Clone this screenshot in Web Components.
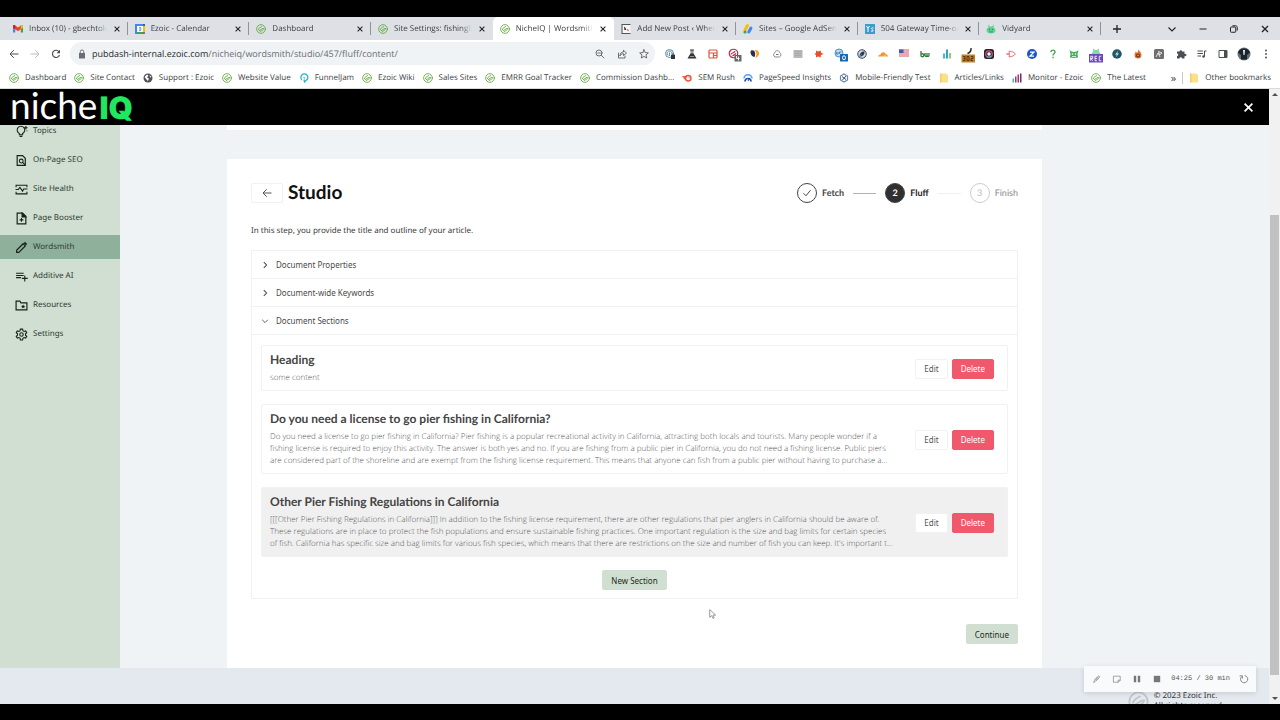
<!DOCTYPE html>
<html lang="en">
<head>
<meta charset="utf-8">
<meta name="viewport" content="width=device-width, initial-scale=1">
<title>NicheIQ | Wordsmith Studio</title>
<style>
    html, body
    {
        margin: 0;
        height: 100%;
    }

    body
    {
        background: #000;
        overflow: hidden;
        font-family: "Noto Sans", sans-serif;
        font-size: 8px;
        text-rendering: geometricPrecision;
        --ui-font: "Open Sans", "Noto Sans", sans-serif;
        --title-font: "Lato", "Open Sans", sans-serif;
        --sage: #d1dfd3;
        --line: #f0f2f2;
        --rail: 120px;
    }
</style>
</head>
<body>
<browser-window>
    <tab-strip slot="tabs">
        <browser-tab icon="gmail">Inbox (10) - gbechtold@ezoic</browser-tab>
        <browser-tab icon="calendar">Ezoic - Calendar</browser-tab>
        <browser-tab icon="ezoic">Dashboard</browser-tab>
        <browser-tab icon="ezoic" class="last">Site Settings: fishinglic.com</browser-tab>
        <browser-tab icon="ezoic" active>NicheIQ | Wordsmith Studio</browser-tab>
        <browser-tab icon="post">Add New Post ‹ Where to</browser-tab>
        <browser-tab icon="adsense">Sites – Google AdSense</browser-tab>
        <browser-tab icon="ys">504 Gateway Time-out</browser-tab>
        <browser-tab icon="vidyard">Vidyard</browser-tab>
    </tab-strip>
    <address-bar slot="address" host="pubdash-internal.ezoic.com" path="/nicheiq/wordsmith/studio/457/fluff/content/"></address-bar>
    <bookmark-bar slot="bookmarks">
        <book-mark icon="ezoic">Dashboard</book-mark>
        <book-mark icon="ezoic">Site Contact</book-mark>
        <book-mark icon="globe">Support : Ezoic</book-mark>
        <book-mark icon="ezoic">Website Value</book-mark>
        <book-mark icon="funnel">FunnelJam</book-mark>
        <book-mark icon="ezoic">Ezoic Wiki</book-mark>
        <book-mark icon="ezoic">Sales Sites</book-mark>
        <book-mark icon="ezoic">EMRR Goal Tracker</book-mark>
        <book-mark icon="ezoic">Commission Dashb...</book-mark>
        <book-mark icon="semrush">SEM Rush</book-mark>
        <book-mark icon="speed">PageSpeed Insights</book-mark>
        <book-mark icon="mobile">Mobile-Friendly Test</book-mark>
        <book-mark icon="folder">Articles/Links</book-mark>
        <book-mark icon="bars">Monitor - Ezoic</book-mark>
        <book-mark icon="ezoic">The Latest</book-mark>
        <book-mark slot="other" icon="folder">Other bookmarks</book-mark>
    </bookmark-bar>

    <niche-header></niche-header>
    <side-nav slot="side">
        <nav-item icon="bulb">Topics</nav-item>
        <nav-item icon="pagesearch">On-Page SEO</nav-item>
        <nav-item icon="health">Site Health</nav-item>
        <nav-item icon="booster">Page Booster</nav-item>
        <nav-item icon="pencil" active>Wordsmith</nav-item>
        <nav-item icon="listplus">Additive AI</nav-item>
        <nav-item icon="resources">Resources</nav-item>
        <nav-item icon="gear">Settings</nav-item>
    </side-nav>
    <studio-panel slot="main">
        <step-item slot="steps" state="done">Fetch</step-item>
        <step-item slot="steps" state="current" number="2">Fluff</step-item>
        <step-item slot="steps" state="wait" number="3">Finish</step-item>

        <collapse-row>Document Properties</collapse-row>
        <collapse-row>Document-wide Keywords</collapse-row>
        <collapse-row open>Document Sections</collapse-row>

        <section-card slot="sections">
            <span slot="title">Heading</span>
            some content
        </section-card>
        <section-card slot="sections">
            <span slot="title">Do you need a license to go pier fishing in California?</span>
            Do you need a license to go pier fishing in California? Pier fishing is a popular recreational activity in California, attracting both locals and tourists. Many people wonder if a<br>
            fishing license is required to enjoy this activity. The answer is both yes and no. If you are fishing from a public pier in California, you do not need a fishing license. Public piers<br>
            are considered part of the shoreline and are exempt from the fishing license requirement. This means that anyone can fish from a public pier without having to purchase a...
        </section-card>
        <section-card slot="sections" active>
            <span slot="title">Other Pier Fishing Regulations in California</span>
            [[[Other Pier Fishing Regulations in California]]] In addition to the fishing license requirement, there are other regulations that pier anglers in California should be aware of.<br>
            These regulations are in place to protect the fish populations and ensure sustainable fishing practices. One important regulation is the size and bag limits for certain species<br>
            of fish. California has specific size and bag limits for various fish species, which means that there are restrictions on the size and number of fish you can keep. It's important t...
        </section-card>
    </studio-panel>
    <niche-footer slot="footer"></niche-footer>
    <record-bar slot="overlay"></record-bar>
</browser-window>

<script>
// Each icon is [viewBox, markup]. Stroke icons take the current text colour.
const line = 'fill="none" stroke="currentColor" stroke-width="1.6" stroke-linecap="round" stroke-linejoin="round"';

const icons = {
    ezoic: ['0 0 20 20', '<g fill="none" stroke="#5fa53c" stroke-width="1.7" stroke-linecap="round"><circle cx="10" cy="10" r="8.7"/><path d="M4.8 11.4c.2-2.600 1.800-3.500 3.600-4.500l3-1.700M6.500 13.300l7-4.500M8.500 15l3.200-1.800c2-1.100 3.600-2.200 3.600-4.400"/></g>'],
    gmail: ['0 0 20 16', '<path d="M0 2v13h4.500V6z" fill="#4285f4"/><path d="M20 2v13h-4.500V6z" fill="#34a853"/><path d="M0 2.500C0 0 3-.5 4.500 1L10 5.200 15.500 1C17 -.5 20 0 20 2.500V5l-10 7.500L0 5z" fill="#ea4335"/><path d="M15.500 1C17-.5 20 0 20 2.500V5l-4.500 3.500z" fill="#fbbc04"/><path d="M0 2.500C0 0 3-.5 4.500 1v7.500L0 5z" fill="#c5221f"/>'],
    calendar: ['0 0 20 20', '<path d="M0 0h20v20H0z" fill="#4285f4"/><path d="M16 4h4v12h-4z" fill="#fbbc04"/><path d="M4 16h12v4H4z" fill="#34a853"/><path d="M16 16h4l-4 4z" fill="#ea4335"/><path d="M16 0h4v4h-4z" fill="#1967d2"/><path d="M4 4h12v12H4z" fill="#fff"/><path d="M8 7h3.500v6H8M8 10h3.500" fill="none" stroke="#4285f4" stroke-width="1.500"/>'],
    post: ['0 0 20 20', '<path d="M1 1h18v18H1z" fill="#f7f7f7"/><path d="M19 1H2v18h17" fill="none" stroke="#555" stroke-width="2.200"/><path d="M6 5l4 4v3H7z" fill="#222"/><path d="M11 11h4v4z" fill="#b33"/>'],
    adsense: ['0 0 20 20', '<path d="M9 3L4 12" stroke="#fbbc04" stroke-width="6" stroke-linecap="round"/><path d="M16 8l-4.500 8" stroke="#4285f4" stroke-width="6" stroke-linecap="round"/><circle cx="4" cy="16" r="3.200" fill="#34a853"/>'],
    ys: ['0 0 20 20', '<path d="M0 0h20v20H0z" fill="#3c9dcb"/><path d="M3 4l3 5 3-5M6 9v7M17 8c-4-2-5 2-2.500 3s2.500 5-2.500 3" fill="none" stroke="#fff" stroke-width="2"/>'],
    vidyard: ['0 0 20 20', '<path d="M5 7L4 1l4 4h4l4-4-1 6c3 1 4 4 4 6 0 4-4 6-9 6s-9-2-9-6c0-2 1-5 4-6z" fill="#5fd193"/><g fill="#2d8b63"><circle cx="7" cy="11" r="1.500"/><circle cx="13" cy="11" r="1.500"/><path d="M6 15h8v1.500H6z"/></g>'],
    globe: ['0 0 20 20', '<circle cx="10" cy="10" r="9" fill="#4d5156"/><path d="M3 8l5-5 3 2-3 4 4 2-2 5-3-3zM13 4l4 4-3 1z" fill="#fff"/>'],
    funnel: ['0 0 20 20', '<path d="M6 14a7 7 0 1 1 8 1l-3 3-1-5" fill="none" stroke="#2bb6c4" stroke-width="2.600"/><path d="M7 8h6l-2 4z" fill="#5fd3cf"/>'],
    semrush: ['0 0 20 20', '<path d="M0 6h10v3H5l4 4H5z" fill="#f0642f"/><circle cx="12.500" cy="10.500" r="5.500" fill="none" stroke="#ee5432" stroke-width="2.800"/><path d="M12.500 8a3 3 0 0 1 2.500 3" stroke="#ee5432" stroke-width="1.400" fill="none"/>'],
    speed: ['0 0 20 20', '<path d="M2 11a8 7.500 0 0 1 16 0" fill="none" stroke="#4ea0f0" stroke-width="3"/><path d="M4 17a6 6 0 0 1 12 0" fill="none" stroke="#1b4fa8" stroke-width="3.400"/><path d="M9 15l6-7-4 8z" fill="#14366f"/>'],
    mobile: ['0 0 20 20', '<path d="M10 2l7 4v8l-7 4-7-4V6z" fill="none" stroke="#6b86ae" stroke-width="2.400"/><path d="M6 7l8 6M14 6l-7 8" stroke="#374d77" stroke-width="2"/>'],
    folder: ['0 0 20 20', '<path d="M2 1h12l4 3v15H2z" fill="#fbe08a"/><path d="M2 1h3v18H2z" fill="#f3cf66"/>'],
    bars: ['0 0 20 20', '<path d="M1 11h3v8H1z" fill="#44b4a6"/><path d="M6 7h3v12H6z" fill="#7e3f98"/><path d="M11 3h3v16h-3z" fill="#c02a62"/><path d="M16 1h3v18h-3z" fill="#5b3475"/>'],

    close: ['0 0 20 20', '<path d="M4 4l12 12M16 4L4 16" fill="none" stroke="currentColor" stroke-width="2.600"/>'],
    plus: ['0 0 20 20', '<path d="M10 2v16M2 10h16" stroke="currentColor" stroke-width="2.600"/>'],
    down: ['0 0 20 20', '<path d="M3 7l7 7 7-7" fill="none" stroke="currentColor" stroke-width="2.200"/>'],
    right: ['0 0 20 20', '<path d="M7 3l7 7-7 7" fill="none" stroke="currentColor" stroke-width="2.600"/>'],
    minimize: ['0 0 20 20', '<path d="M3 10h14" stroke="currentColor" stroke-width="2"/>'],
    restore: ['0 0 20 20', '<path d="M3 7.500c0-1 .5-1.500 1.500-1.500H12c1 0 1.500.5 1.500 1.500V15c0 1-.5 1.500-1.500 1.500H4.500C3.500 16.500 3 16 3 15zM7 3.500h6c2 0 3.500 1.500 3.500 3.500v6" fill="none" stroke="currentColor" stroke-width="2"/>'],
    back: ['0 0 20 20', '<path d="M19 10H2M9.500 2.500L2 10l7.500 7.500" fill="none" stroke="currentColor" stroke-width="2"/>'],
    forward: ['0 0 20 20', '<path d="M1 10h17M10.500 2.500L18 10l-7.500 7.500" fill="none" stroke="currentColor" stroke-width="2"/>'],
    reload: ['0 0 20 20', '<path d="M16 5.500A7.200 7.200 0 1 0 17 12" fill="none" stroke="currentColor" stroke-width="2.300"/><path d="M18 1.500V8.500h-7z" fill="currentColor"/>'],
    lock: ['0 0 20 20', '<path d="M4 8h12v11H4z" fill="currentColor"/><path d="M6.500 9V5.500a3.500 3.500 0 0 1 7 0V9" fill="none" stroke="currentColor" stroke-width="2"/>'],
    zoomout: ['0 0 20 20', `<g ${line}><circle cx="8" cy="8" r="6"/><path d="M12.500 12.500L18 18M5.500 8h5"/></g>`],
    share: ['0 0 20 20', `<path ${line} d="M3 8v10h13v-4M6 13c.5-5 3-7 7-7V2.500L19 8l-6 5V9.500c-3 0-5 1-7 3.500z"/>`],
    star: ['0 0 20 20', `<path ${line} d="M10 1.500l2.500 5.700 6.200.6-4.700 4.100 1.400 6.100L10 14.800 4.600 18 6 11.900 1.300 7.800l6.200-.6z"/>`],

    e1: ['0 0 20 20', '<g fill="none" stroke="#5d8bb0" stroke-width="2"><circle cx="9" cy="9" r="8"/><path d="M6 13a5 5 0 1 1 8-3M9 7v7"/></g><path d="M12 12h8v8h-8z" fill="#333"/><path d="M14 12v-2h4v2" fill="none" stroke="#333" stroke-width="1.500"/>'],
    e2: ['0 0 20 20', '<path d="M6 1h8v2h-1.500v5L19 19H1L7.500 8V3H6z" fill="#333"/><path d="M9 3h2v6h-2z" fill="#fff"/><path d="M6 15h8" stroke="#fff"/>'],
    e3: ['0 0 20 20', '<rect x="2" y="2" width="16" height="16" rx="2" fill="none" stroke="#d9573a" stroke-width="2.400"/><path d="M2 8h16M11 8v10M11 13h7" stroke="#d9573a" stroke-width="2.400"/>'],
    e4: ['0 0 20 20', '<g fill="none" stroke="#b8274c" stroke-width="2.400"><circle cx="9" cy="9" r="8.500"/><path d="M4 11c0-4 8-3 8-7M7 14l7-5"/></g><path d="M11 12h14v13H11z" fill="#666"/><path d="M15 14v5h6M19 15v8" stroke="#fff" stroke-width="1.800" fill="none"/>'],
    e5: ['0 0 20 20', '<path d="M2 3c8-2 10 6 7 13C3 15-1 8 2 3z" fill="#2b2f4a"/><path d="M9 2c10-2 14 12 1 16 4-5 4-11-1-16z" fill="#f1a32e"/>'],
    e6: ['0 0 20 20', '<path d="M6 16a5 5 0 0 1 0-9c1-5 8-5 9 0a5 5 0 0 1 0 9z" fill="none" stroke="#777" stroke-width="1.700"/><path d="M8 11h5" stroke="#777" stroke-width="2"/>'],
    e7: ['0 0 20 20', '<path d="M1 2h18v16H1z" fill="#b9b9b9"/><path d="M3 5h14M3 9h14M3 13h14" stroke="#9b9b9b"/>'],
    e8: ['0 0 20 20', '<path d="M4 3l4 2 5-2 1 4 5 3-5 2-1 5-5-2-4 2 0-5-3-2 3-2z" fill="#e8502d"/>'],
    e9: ['0 0 20 20', '<circle cx="8" cy="8" r="8" fill="#bdd9ef" stroke="#4c93cc" stroke-width="2"/><path d="M3 6v4h3V6M9 10V6h4" fill="none" stroke="#2c72ad" stroke-width="1.500"/><rect x="10" y="10" width="16" height="15" rx="1" fill="#1767b5"/><ellipse cx="18" cy="17.500" rx="3" ry="4" fill="none" stroke="#fff" stroke-width="2"/>'],
    e10: ['0 0 20 20', '<circle cx="10" cy="10" r="8.500" fill="#d3dce6" stroke="#36475c" stroke-width="2"/><path d="M5 15c0-6 3-10 10-10 0 7-3 10-10 10z" fill="#2a3a4e"/><path d="M2 17l7-6" stroke="#5fa0d8" stroke-width="2"/>'],
    e11: ['0 0 20 20', '<path d="M0 15c1-4 4-3 5-4 2-6 9-6 10-1 3 0 4 2 5 5z" fill="#f0992c"/><path d="M9 15l6-2" stroke="#fff"/>'],
    e12: ['0 0 20 20', '<path d="M0 1h20v14H0z" fill="#fff"/><path d="M0 2h20M0 6h20M0 10h20M0 14h20" stroke="#d4525e" stroke-width="2"/><path d="M0 1h9v7H0z" fill="#4856a5"/>'],
    e13: ['0 0 20 20', '<g fill="none" stroke="#2f7d35" stroke-width="2.600"><path d="M2 4v11M2 11a3 3 0 1 1 0 3M10 8v4c0 4 4 4 4 0V8m0 4c0 4 4 4 4 0V8"/></g>'],
    e14: ['0 0 20 20', '<path d="M2 9h4v10H2z" fill="#45b4d6"/><path d="M8 1h4v18H8z" fill="#2fa3ba"/><path d="M14 8h4v11h-4z" fill="#8ccf6d"/>'],
    e15: ['0 0 20 20', '<path d="M16 -2c1 6-2 9-7 11" fill="none" stroke="#222" stroke-width="2.800"/><path d="M-3 11h27v16H-3z" fill="#c77d1d"/><path d="M0 15h4v8H0m1-4h3M8 15h4v8H8zM16 15h4v4h-4v4h4" fill="none" stroke="#402500" stroke-width="1.600"/>'],
    e16: ['0 0 20 20', '<rect width="20" height="20" rx="5" fill="#262626"/><circle cx="10" cy="10" r="6.500" fill="none" stroke="#e8488a" stroke-width="2.500"/><circle cx="10" cy="10" r="3.500" fill="#fff"/><path d="M14 14a6 6 0 0 1-8 1" fill="none" stroke="#3cb8a7" stroke-width="2.500"/>'],
    e17: ['0 0 20 20', '<path d="M6 4l8 2 5 4-5 4-8 2 1-6z" fill="none" stroke="#e46a73" stroke-width="1.800"/><path d="M1 10h5" stroke="#e46a73" stroke-width="3"/>'],
    e18: ['0 0 20 20', '<circle cx="10" cy="10" r="10" fill="#1e54c7"/><path d="M6 6h8l-8 8h8" fill="none" stroke="#fff" stroke-width="2.500"/>'],
    e19: ['0 0 20 20', '<path d="M6 6c0-5 8-5 8 0 0 3-4 3-4 7M10 15.500v3" fill="none" stroke="#4ba552" stroke-width="2.800"/>'],
    e20: ['0 0 20 20', '<path d="M1 2l4 3 5 1 5-1 4-3-2 8 1 7-8 1-8-1 1-7z" fill="#45ad5b"/><circle cx="7" cy="10" r="1.600" fill="#fff"/><circle cx="13" cy="10" r="1.600" fill="#fff"/><path d="M6 15h8" stroke="#fff" stroke-width="1.500"/>'],
    e21: ['0 0 20 20', '<path d="M4 4V-1l4 3h4l4-3v5l3 6H1z" fill="#86d8ad"/><path d="M-4 10h28v17H-4z" fill="#6a48bd"/><path d="M-.5 23.500v-9h4v4.500h-4l4 4.500M12 14.500H8v9h4M8 19h4M20.500 14.500h-4v9h4" fill="none" stroke="#fff" stroke-width="1.700"/>'],
    e22: ['0 0 20 20', '<circle cx="10" cy="10" r="9.500" fill="#1f5566"/><path d="M13 3l-7 8h4l-3 6 7-8h-4z" fill="#cfeef2"/>'],
    e23: ['0 0 20 20', '<path d="M10 0c1 3 7 6 7 12a7 7 0 0 1-14 0c0-3 2-4 2-7 2 1 3 2 3 3 2-2 3-5 2-8z" fill="#e2702c"/><circle cx="10" cy="13" r="4" fill="#7d3517"/><circle cx="10" cy="13" r="1.500" fill="#fbb64d"/>'],
    e24: ['0 0 20 20', '<rect width="20" height="20" rx="3" fill="#6e6e6e"/><path d="M4 16L8 8l4 8M9 5l7 3-5 4z" fill="none" stroke="#fff" stroke-width="1.600"/>'],
    e25: ['0 0 20 20', '<path d="M7 5a2.500 2.500 0 1 1 5 0h5v5a2.500 2.500 0 1 1 0 4v5h-5a2.500 2.500 0 1 0-5 0H2v-5a2.500 2.500 0 1 0 0-5V5z" fill="#4b4f53"/>'],
    e26: ['0 0 20 20', '<path d="M1 4h11M1 9h11M1 14h7" stroke="#4b4f53" stroke-width="2"/><path d="M15 15V4h4" fill="none" stroke="#4b4f53" stroke-width="2"/><circle cx="13" cy="15" r="2.500" fill="#4b4f53"/>'],
    e27: ['0 0 20 20', '<path d="M2 3h16v14H2z" fill="none" stroke="#4b4f53" stroke-width="2"/><path d="M12 3h6v14h-6z" fill="#4b4f53"/>'],
    e28: ['0 0 20 20', '<circle cx="10" cy="10" r="13" fill="#5f6f78"/><path d="M-2 7c3-11 21-11 24 0l-6 5v9H4v-9z" fill="#1c2329"/><path d="M8 2h4l-1 10H9z" fill="#e9eef0"/>'],
    e29: ['0 0 20 20', '<g fill="#4b4f53"><circle cx="10" cy="3" r="1.900"/><circle cx="10" cy="10" r="1.900"/><circle cx="10" cy="17" r="1.900"/></g>'],

    bulb: ['0 0 24 24', '<path d="M8 15.500a7 7 0 1 1 6 0V18H8zM8.500 21h5" fill="none" stroke="currentColor" stroke-width="2"/><path d="M20 2l.8 2.200 2.200.8-2.200.8L20 8l-.8-2.200L17 5l2.200-.8zM22 9v3" fill="currentColor" stroke="currentColor"/>'],
    pagesearch: ['0 0 24 24', '<path d="M19 20V8l-5-5H4v18h15" fill="none" stroke="currentColor" stroke-width="2.200"/><circle cx="11.500" cy="13" r="3.500" fill="none" stroke="currentColor" stroke-width="2"/><path d="M14 15.500l6 6" stroke="currentColor" stroke-width="2.200"/>'],
    health: ['0 0 24 24', '<path d="M2 8V4h20v4M2 16v4h20v-4M1 12h5l3-4 5 7 2-4h7" fill="none" stroke="currentColor" stroke-width="2"/>'],
    booster: ['0 0 24 24', '<path d="M14 2H4v20h16V8z" fill="none" stroke="currentColor" stroke-width="2.200"/><path d="M13 2v7h7zM12 11v7M8.500 14.500h7" fill="currentColor" stroke="currentColor" stroke-width="2"/>'],
    pencil: ['0 0 24 24', '<path d="M3 21v-4L15 5l4 4L7 21z" fill="none" stroke="currentColor" stroke-width="2.200"/><path d="M16 4l2.500-2.500 4 4L20 8z" fill="currentColor"/>'],
    listplus: ['0 0 24 24', '<path d="M2 6h14M2 10h14M2 14h9M18 10v11M12.500 15.500h11" stroke="currentColor" stroke-width="2"/>'],
    resources: ['0 0 24 24', '<path d="M2 4h7l2 3h11v13H2z" fill="none" stroke="currentColor" stroke-width="2.200"/><path d="M15 10l1.200 2.500 2.800.3-2.100 1.800.6 2.800-2.500-1.500-2.500 1.500.6-2.800-2.100-1.800 2.800-.3z" fill="currentColor"/>'],
    gear: ['0 0 24 24', '<path d="M10 2h4l.6 3 2.200 1.300 2.900-1 2 3.400-2.300 2v2.600l2.300 2-2 3.400-2.900-1-2.200 1.300-.6 3h-4l-.6-3-2.200-1.300-2.900 1-2-3.400 2.300-2v-2.600l-2.300-2 2-3.400 2.900 1L9.400 5z" fill="none" stroke="currentColor" stroke-width="2"/><circle cx="12" cy="12" r="3.200" fill="none" stroke="currentColor" stroke-width="2"/>'],

    check: ['0 0 20 20', '<path d="M3 10.500l5 5L17 4.500" fill="none" stroke="currentColor" stroke-width="2"/>'],
    draw: ['0 0 20 20', `<path ${line} d="M2 18l2-6L13 3c2-2 5 1 3 3l-9 9zM6 11l6-6M8 13l6-5"/>`],
    note: ['0 0 20 20', `<path ${line} d="M2 3h16v10l-5 5H2zM18 13h-5v5"/>`],
    pause: ['0 0 20 20', '<path d="M2 2h6v16H2zM12 2h6v16h-6z" fill="currentColor"/>'],
    stop: ['0 0 20 20', '<path d="M2 2h16v16H2z" fill="currentColor"/>'],
    restart: ['0 0 20 20', '<path d="M12 1.500A9 9 0 1 1 4 4M-1 2h7v7" fill="none" stroke="currentColor" stroke-width="2.200"/>'],
    pointer: ['0 0 12 18', '<path d="M1 1v14l3.500-3 2.500 5 2-1-2-5h4.500z" fill="#fff" stroke="#666" stroke-width="1.200"/>']
};

function define(name, html, setup)
{
    const template = document.createElement('template');
    template.innerHTML = html;

    customElements.define(name, class extends HTMLElement
    {
        constructor()
        {
            super();

            this.attachShadow({ mode: 'open' });
            this.shadowRoot.append(template.content.cloneNode(true));
        }

        connectedCallback()
        {
            if (setup) setup(this, this.shadowRoot);
        }
    });
}

const iconTemplate = document.createElement('template');
iconTemplate.innerHTML = `
    <style>
        :host
        {
            display: block;
            flex: none;
            width: 10px;
            height: 10px;
        }

        svg
        {
            display: block;
            width: 100%;
            height: 100%;
            overflow: visible;
        }
    </style>
    <svg aria-hidden="true"></svg>
`;

class UiIcon extends HTMLElement
{
    static observedAttributes = ['name'];

    constructor()
    {
        super();

        this.attachShadow({ mode: 'open' });
        this.shadowRoot.append(iconTemplate.content.cloneNode(true));
    }

    attributeChangedCallback(attribute, previous, name)
    {
        const [box, markup] = icons[name];
        const svg = this.shadowRoot.querySelector('svg');

        svg.setAttribute('viewBox', box);
        svg.innerHTML = markup;
    }
}

customElements.define('ui-icon', UiIcon);

define('browser-window', `
    <style>
        :host
        {
            display: flex;
            flex-direction: column;
            box-sizing: border-box;
            height: 100vh;
            padding: 17px 0 16px;
            position: relative;
        }

        .viewport
        {
            flex: 1;
            min-height: 0;
            display: flex;
        }

        .page
        {
            flex: 1;
            min-width: 0;
            display: flex;
            flex-direction: column;
            background: #eff3f6;
            overflow: hidden;
        }

        .body
        {
            flex: 1;
            min-height: 0;
            display: flex;
        }

        .scroll
        {
            width: 11px;
            display: flex;
            flex-direction: column;
            align-items: center;
            background: #f1f1f1;
        }

        .scroll i
        {
            border: 3px solid transparent;
            margin: 1px 0;
        }

        .scroll .up
        {
            border-bottom-color: #505050;
        }

        .scroll .down
        {
            border-top-color: #505050;
        }

        .track
        {
            flex: 1;
            align-self: stretch;
            display: grid;
            grid-template-rows: 118fr 460fr 21fr;
        }

        .thumb
        {
            grid-row: 2;
            margin: 0 1px;
            background: #c1c1c1;
        }
    </style>
    <slot name="tabs"></slot>
    <slot name="address"></slot>
    <slot name="bookmarks"></slot>
    <div class="viewport">
        <div class="page">
            <slot></slot>
            <div class="body">
                <slot name="side"></slot>
                <slot name="main"></slot>
            </div>
            <slot name="footer"></slot>
        </div>
        <div class="scroll"><i class="up"></i><div class="track"><div class="thumb"></div></div><i class="down"></i></div>
    </div>
    <slot name="overlay"></slot>
`);

define('tab-strip', `
    <style>
        :host
        {
            display: flex;
            height: 23px;
            padding-left: 6px;
            background: #dde1e5;
            color: #222;
        }

        .tabs
        {
            flex: 1;
            display: grid;
            grid-auto-flow: column;
            grid-auto-columns: 1fr;
        }

        .controls
        {
            width: 179px;
            display: flex;
            align-items: center;
        }

        button
        {
            border: 0;
            padding: 0;
            background: none;
            color: inherit;
            width: 31px;
            display: grid;
            place-items: center;
        }

        .new
        {
            margin-right: auto;
        }
    </style>
    <div class="tabs"><slot></slot></div>
    <div class="controls">
        <button class="new" aria-label="New tab"><ui-icon name="plus"></ui-icon></button>
        <button aria-label="Search tabs"><ui-icon name="down"></ui-icon></button>
        <button aria-label="Minimize"><ui-icon name="minimize"></ui-icon></button>
        <button aria-label="Restore"><ui-icon name="restore"></ui-icon></button>
        <button aria-label="Close window"><ui-icon name="close"></ui-icon></button>
    </div>
`);

define('browser-tab', `
    <style>
        :host
        {
            display: flex;
            align-items: center;
            gap: 6px;
            min-width: 0;
            padding: 0 7px;
            position: relative;
            font: 8px/12px var(--ui-font);
            color: #3c4043;
        }

        :host::after
        {
            content: "";
            width: 1px;
            height: 13px;
            background: #8f9499;
            position: absolute;
            right: 0;
        }

        :host([active])
        {
            background: #fff;
            border-radius: 5px 5px 0 0;
        }

        :host([active])::after, :host(.last)::after
        {
            display: none;
        }

        a
        {
            flex: 1;
            min-width: 0;
            overflow: hidden;
            white-space: nowrap;
            color: inherit;
            text-decoration: none;
            mask-image: linear-gradient(to right, #000 86%, transparent);
        }

        button
        {
            border: 0;
            padding: 0;
            background: none;
            color: #222;
        }

        button ui-icon
        {
            width: 8px;
            height: 8px;
        }
    </style>
    <ui-icon class="favicon"></ui-icon>
    <a href="#"><slot></slot></a>
    <button aria-label="Close tab"><ui-icon name="close"></ui-icon></button>
`, (host, root) =>
{
    root.querySelector('.favicon').setAttribute('name', host.getAttribute('icon'));
});

define('address-bar', `
    <style>
        :host
        {
            display: flex;
            align-items: center;
            height: 27px;
            padding: 0 9px;
            background: #fff;
            color: #4b4f53;
        }

        button
        {
            border: 0;
            padding: 0;
            background: none;
            color: inherit;
        }

        .nav
        {
            display: flex;
            gap: 11px;
            padding-right: 9px;
        }

        .nav [disabled]
        {
            color: #b8bbbe;
        }

        .omnibox
        {
            flex: 1;
            display: flex;
            align-items: center;
            gap: 12px;
            height: 23px;
            box-sizing: border-box;
            padding: 0 6px 0 7px;
            border-radius: 12px;
            background: #f0f3f5;
        }

        .url
        {
            flex: 1;
            display: flex;
            align-items: center;
            gap: 5px;
            font: 9px/14px var(--ui-font);
            color: #6a6e72;
        }

        .url b
        {
            font-weight: 400;
            color: #26282a;
        }

        .url span
        {
            white-space: nowrap;
        }

        .extensions
        {
            display: flex;
            flex: 0 0 48%;
            justify-content: space-between;
            align-items: center;
            padding-left: 10px;
        }
    </style>
    <div class="nav">
        <button aria-label="Back"><ui-icon name="back"></ui-icon></button>
        <button aria-label="Forward" disabled><ui-icon name="forward"></ui-icon></button>
        <button aria-label="Reload"><ui-icon name="reload"></ui-icon></button>
    </div>
    <div class="omnibox">
        <div class="url"><ui-icon name="lock"></ui-icon><span><b></b></span></div>
        <button aria-label="Zoom"><ui-icon name="zoomout"></ui-icon></button>
        <button aria-label="Share"><ui-icon name="share"></ui-icon></button>
        <button aria-label="Bookmark this tab"><ui-icon name="star"></ui-icon></button>
    </div>
    <div class="extensions"></div>
`, (host, root) =>
{
    root.querySelector('b').textContent = host.getAttribute('host');
    root.querySelector('.url span').append(host.getAttribute('path'));

    for (let i = 1; i <= 29; i++)
    {
        const button = document.createElement('button');
        button.setAttribute('aria-label', `Extension ${i}`);
        button.innerHTML = `<ui-icon name="e${i}"></ui-icon>`;
        root.querySelector('.extensions').append(button);
    }
});

define('bookmark-bar', `
    <style>
        :host
        {
            display: flex;
            align-items: center;
            height: 22px;
            padding: 0 9px;
            box-sizing: border-box;
            background: #fff;
            border-bottom: 1px solid #d8dadc;
            color: #3c4043;
            font: 8px/12px var(--ui-font);
        }

        .list
        {
            flex: 1;
            min-width: 0;
            display: flex;
            justify-content: space-between;
        }

        .more
        {
            display: flex;
            align-items: center;
            gap: 6px;
            padding-left: 25px;
        }

        .more i
        {
            width: 1px;
            height: 12px;
            background: #c7cacd;
        }

        button
        {
            border: 0;
            padding: 0;
            background: none;
            color: inherit;
            font: 11px/12px var(--ui-font);
        }
    </style>
    <div class="list"><slot></slot></div>
    <div class="more"><button aria-label="More bookmarks">»</button><i></i><slot name="other"></slot></div>
`);

define('book-mark', `
    <style>
        :host
        {
            display: block;
        }

        a
        {
            display: flex;
            align-items: center;
            gap: 6px;
            white-space: nowrap;
            color: inherit;
            text-decoration: none;
        }
    </style>
    <a href="#"><ui-icon></ui-icon><slot></slot></a>
`, (host, root) =>
{
    root.querySelector('ui-icon').setAttribute('name', host.getAttribute('icon'));
});

define('niche-header', `
    <style>
        :host
        {
            display: flex;
            align-items: center;
            justify-content: space-between;
            height: 36px;
            padding: 0 14px 0 10px;
            background: #000;
            color: #fff;
        }

        .logo
        {
            display: flex;
            align-items: baseline;
            gap: 2px;
            font: 37px/36px var(--title-font);
        }

        .logo b
        {
            font: 900 31px/36px "Inter", sans-serif;
            color: #1fe860;
        }

        button
        {
            border: 0;
            padding: 0;
            background: none;
            color: inherit;
        }

        ui-icon
        {
            width: 13px;
            height: 13px;
        }
    </style>
    <div class="logo">niche<b>IQ</b></div>
    <button aria-label="Close"><ui-icon name="close"></ui-icon></button>
`);

define('side-nav', `
    <style>
        :host
        {
            flex: none;
            width: var(--rail);
            overflow: hidden;
            background: #d0dfd1;
        }

        /* list is scrolled a little under the header */
        nav
        {
            display: flex;
            flex-direction: column;
            gap: 5px;
            margin-top: -6px;
        }
    </style>
    <nav><slot></slot></nav>
`);

define('nav-item', `
    <style>
        :host
        {
            display: block;
        }

        :host([active])
        {
            background: #8fb19b;
        }

        a
        {
            display: flex;
            align-items: center;
            gap: 5px;
            height: 24px;
            padding-left: 15px;
            color: #2c3a32;
            line-height: 12px;
            text-decoration: none;
            white-space: nowrap;
        }

        ui-icon
        {
            width: 13px;
            height: 13px;
            color: #16231b;
        }
    </style>
    <a href="#"><ui-icon></ui-icon><slot></slot></a>
`, (host, root) =>
{
    root.querySelector('ui-icon').setAttribute('name', host.getAttribute('icon'));
});

define('app-button', `
    <style>
        :host
        {
            display: block;
        }

        button
        {
            display: grid;
            place-items: center;
            box-sizing: border-box;
            height: 20px;
            padding: 0 8px;
            border: 1px solid var(--line);
            border-radius: 2px;
            background: #fff;
            color: #555;
            font: inherit;
            white-space: nowrap;
        }

        :host([kind="danger"]) button
        {
            background: #f0586c;
            border-color: #f0586c;
            color: #fff;
        }

        :host([kind="primary"]) button
        {
            background: var(--sage);
            border-color: var(--sage);
            color: #1d2b22;
        }

        :host([kind="back"]) button
        {
            padding: 0 10px;
        }
    </style>
    <button><slot></slot></button>
`);

define('studio-panel', `
    <style>
        :host
        {
            flex: 1;
            min-width: 0;
            display: flex;
            flex-direction: column;
            gap: 29px;
            padding-right: var(--rail);
        }

        .above, .card
        {
            width: 79.2%;
            margin: 0 auto;
            box-sizing: border-box;
            background: #fff;
        }

        .above
        {
            flex: 0 0 5px;
        }

        .card
        {
            flex: 1;
            padding: 23px 24px 20px;
            position: relative;
            color: #3a3a3a;
        }

        header, .steps
        {
            display: flex;
            align-items: center;
        }

        h1
        {
            flex: 1;
            margin: 0 0 0 5px;
            font: 700 19px/22px var(--title-font);
            color: #111;
        }

        .steps
        {
            gap: 9px;
        }

        p
        {
            margin: 21px 0 13px;
            line-height: 12px;
        }

        .collapse
        {
            border: 1px solid var(--line);
        }

        .sections
        {
            display: flex;
            flex-direction: column;
            gap: 13px;
            padding: 10px 9px 8px;
        }

        .sections app-button
        {
            align-self: center;
        }

        .next
        {
            display: flex;
            justify-content: flex-end;
            margin-top: 25px;
        }

        .pointer
        {
            position: absolute;
            left: 482px;
            top: 450px;
            width: 7px;
        }
    </style>
    <div class="above"></div>
    <div class="card">
        <header>
            <app-button kind="back"><ui-icon name="back"></ui-icon></app-button>
            <h1>Studio</h1>
            <div class="steps"><slot name="steps"></slot></div>
        </header>
        <p>In this step, you provide the title and outline of your article.</p>
        <div class="collapse">
            <slot></slot>
            <div class="sections">
                <slot name="sections"></slot>
                <app-button kind="primary">New Section</app-button>
            </div>
        </div>
        <div class="next"><app-button kind="primary">Continue</app-button></div>
        <ui-icon class="pointer" name="pointer"></ui-icon>
    </div>
`);

define('step-item', `
    <style>
        :host
        {
            display: flex;
            align-items: center;
            gap: 5px;
            font: 700 9px/12px var(--title-font);
            color: #444;
        }

        .dot
        {
            display: grid;
            place-items: center;
            box-sizing: border-box;
            width: 20px;
            height: 20px;
            border: 1px solid #444;
            border-radius: 50%;
        }

        :host([state="current"])
        {
            color: #222;
        }

        :host([state="current"]) .dot
        {
            background: #303030;
            color: #fff;
        }

        :host([state="wait"])
        {
            color: #888;
            font-weight: 400;
        }

        :host([state="wait"]) .dot
        {
            border-color: #ccc;
            color: #bbb;
        }

        i
        {
            width: 23px;
            height: 1px;
            margin-left: 4px;
            background: #aebd8a;
        }

        :host([state="current"]) i
        {
            background: #f0f0f0;
        }

        :host([state="wait"]) i
        {
            display: none;
        }
    </style>
    <div class="dot"></div>
    <slot></slot>
    <i></i>
`, (host, root) =>
{
    const dot = root.querySelector('.dot');

    if (host.hasAttribute('number')) dot.textContent = host.getAttribute('number');
    else dot.innerHTML = '<ui-icon name="check"></ui-icon>';
});

define('collapse-row', `
    <style>
        :host
        {
            display: block;
            border-bottom: 1px solid var(--line);
        }

        button
        {
            display: flex;
            align-items: center;
            gap: 7px;
            width: 100%;
            height: 27px;
            border: 0;
            padding: 0 9px;
            background: none;
            color: #4a4a4a;
            font: inherit;
        }

        ui-icon
        {
            width: 8px;
            height: 8px;
        }
    </style>
    <button><ui-icon></ui-icon><slot></slot></button>
`, (host, root) =>
{
    root.querySelector('ui-icon').setAttribute('name', host.hasAttribute('open') ? 'down' : 'right');
});

define('section-card', `
    <style>
        :host
        {
            display: flex;
            align-items: center;
            gap: 4px;
            padding: 7px 13px 6px 8px;
            border: 1px solid var(--line);
            border-radius: 2px;
        }

        :host([active])
        {
            background: #f0f0f0;
        }

        .text
        {
            flex: 1;
            min-width: 0;
            white-space: nowrap;
            font: 350 8px/12px "Open Sans", sans-serif;
            color: #5c5c5c;
        }

        h2
        {
            margin: 0 0 5px;
            font: 700 12px/14px var(--title-font);
            color: #444;
        }
    </style>
    <div class="text">
        <h2><slot name="title"></slot></h2>
        <slot></slot>
    </div>
    <app-button>Edit</app-button>
    <app-button kind="danger">Delete</app-button>
`);

define('niche-footer', `
    <style>
        :host
        {
            display: flex;
            justify-content: flex-end;
            gap: 5px;
            height: 36px;
            box-sizing: border-box;
            padding: 23px 45px 0 0;
            overflow: hidden;
            background: #e4e9f0;
            color: #333;
            line-height: 10px;
            white-space: nowrap;
        }

        ui-icon
        {
            width: 21px;
            height: 21px;
            filter: grayscale(1);
            opacity: 0.4;
        }
    </style>
    <ui-icon name="ezoic"></ui-icon>
    <div>© 2023 Ezoic Inc.<br>All rights reserved.</div>
`);

define('record-bar', `
    <style>
        :host
        {
            display: flex;
            align-items: center;
            gap: 12px;
            height: 26px;
            padding: 0 8px 0 9px;
            position: absolute;
            right: 24px;
            bottom: 28px;
            background: #f8fafc;
            box-shadow: 0 1px 5px #0002;
            font: 7px/12px "Liberation Mono", monospace;
            color: #777;
        }

        button
        {
            border: 0;
            padding: 0;
            background: none;
            color: inherit;
        }

        span
        {
            margin: 0 -2px;
            color: #555;
        }

        ui-icon
        {
            width: 8px;
            height: 8px;
        }
    </style>
    <button aria-label="Draw"><ui-icon name="draw"></ui-icon></button>
    <button aria-label="Note"><ui-icon name="note"></ui-icon></button>
    <button aria-label="Pause"><ui-icon name="pause"></ui-icon></button>
    <button aria-label="Stop"><ui-icon name="stop"></ui-icon></button>
    <span>04:25 / 30 min</span>
    <button aria-label="Restart"><ui-icon name="restart"></ui-icon></button>
`);
</script>
</body>
</html>
